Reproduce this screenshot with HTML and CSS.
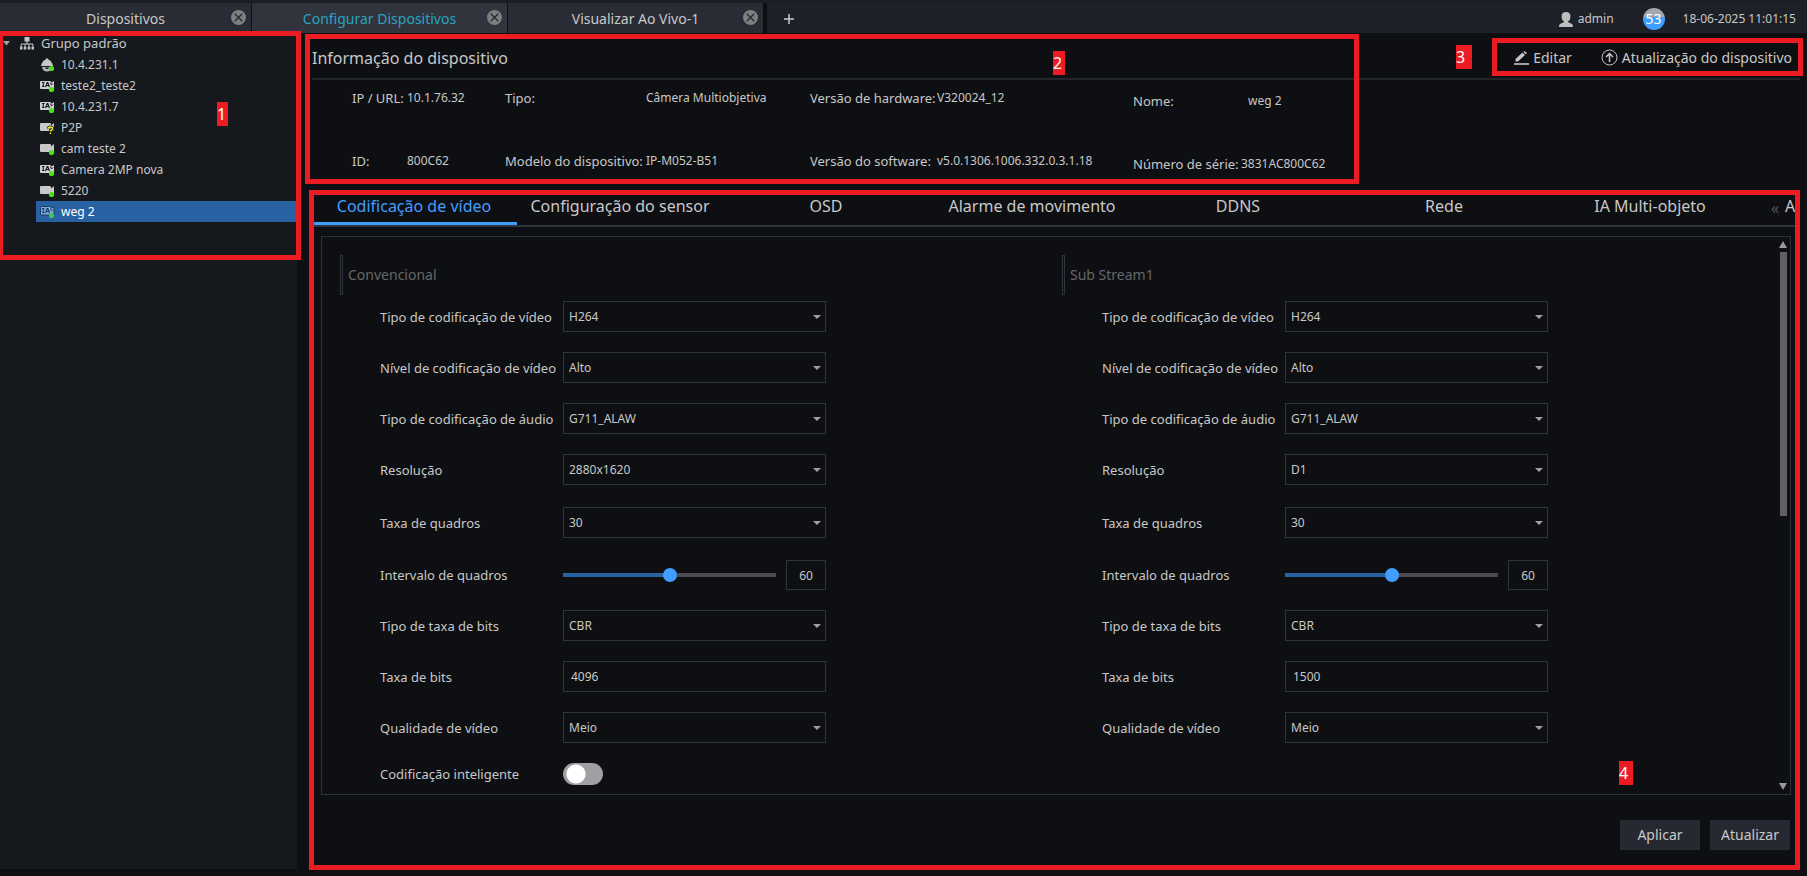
FILE: index.html
```
<!DOCTYPE html>
<html lang="pt">
<head>
<meta charset="utf-8">
<title>Configurar Dispositivos</title>
<link rel="stylesheet" href="styles.css">
</head>
<body>
<!-- icons used more than once -->
<svg class="sprite" aria-hidden="true">
  <symbol id="close" viewBox="0 0 15 15">
    <circle cx="7.5" cy="7.5" r="7.5" fill="#7e7f80"/>
    <path d="M3.8 3.8l7.4 7.4M11.2 3.8l-7.4 7.4" stroke="#26282e" stroke-width="1.3"/>
  </symbol>
  <symbol id="cam" viewBox="0 0 16 14">
    <path d="M1 2h9q1 0 1 1v1.500L14 2v8l-3-2v1q0 1-1 1H1q-1 0-1-1V3q0-1 1-1z" fill="#c8c8c8"/>
    <circle cx="11.500" cy="10.500" r="2.600" fill="#4fe01e"/>
  </symbol>
  <symbol id="ia" viewBox="0 0 16 14">
    <path d="M1 2h9.500l1 1.500L14 2v8H1q-1 0-1-1V3q0-1 1-1z" fill="#d0d0d0"/>
    <path d="M2 3.500h2.500M3.250 3.500v4M2 7.500h2.500M5.500 8l1.700-4.500h.6L9.500 8M6.500 6.500h2" fill="none" stroke="#15181d" stroke-width="1.100"/>
    <path d="M10.500 3.500l1 2.500 1.500-1.500" fill="none" stroke="#15181d"/>
    <circle cx="11.500" cy="10.500" r="2.600" fill="#4fe01e"/>
  </symbol>
</svg>

<div class="topbar">
  <div class="tab"><span>Dispositivos</span><button class="tab-close" aria-label="Fechar"><svg><use href="#close"/></svg></button></div>
  <div class="tab tab-active"><span>Configurar Dispositivos</span><button class="tab-close" aria-label="Fechar"><svg><use href="#close"/></svg></button></div>
  <div class="tab"><span>Visualizar Ao Vivo-1</span><button class="tab-close" aria-label="Fechar"><svg><use href="#close"/></svg></button></div>
  <div class="status">
    <button class="tab-new" aria-label="Nova aba"><svg width="10" height="10" viewBox="0 0 10 10"><path d="M5 0v10M0 5h10" stroke="#c8c8c8" stroke-width="1.500"/></svg></button>
    <svg class="user" width="14" height="15" viewBox="0 0 14 15"><path d="M7 0q4.500 0 4.500 4.500Q11.500 8 9 9.500v.5l4 2q1 .5 1 3H0q0-2.500 1-3l4-2v-.5Q2.500 8 2.500 4.500 2.500 0 7 0z" fill="#bdbdbd"/></svg>
    <span class="user-name">admin</span>
    <span class="usage">53</span>
    <span class="clock">18-06-2025 11:01:15</span>
  </div>
</div>

<div class="page">
  <nav class="sidebar">
    <div class="group">
      <svg class="caret" width="7" height="5" viewBox="0 0 7 5"><path d="M0 0h7L3.500 4.500z" fill="#a0a0a0"/></svg>
      <svg class="group-icon" width="14" height="13" viewBox="0 0 14 13"><path d="M4.500 0h5v4.500h-5zM0 9.500h2.500V12.500H0zM3.800 9.500h2.500v3H3.800zM7.700 9.500h2.500v3H7.700zM11.500 9.500H14v3h-2.500z" fill="#c8c8c8"/><path d="M7 4v3M1.200 9.500V7h11.600v2.500M5 9.500V7M9 9.500V7" fill="none" stroke="#c8c8c8"/></svg>
      <span>Grupo padrão</span>
    </div>
    <ul class="devices">
      <li><svg viewBox="0 0 16 14"><path d="M7 0l1.500 1.500Q12 3 13 8H1Q2 3 5.500 1.500z" fill="#c8c8c8"/><path d="M2 9h10q-1 4.500-5 4.500T2 9z" fill="#b5b5b5"/><path d="M5 9.500q.5 1.500 2 1.500t2-1.500z" fill="#15181d"/><circle cx="11.500" cy="10.500" r="2.600" fill="#4fe01e"/></svg><a href="#">10.4.231.1</a></li>
      <li><svg><use href="#ia"/></svg><a href="#">teste2_teste2</a></li>
      <li><svg><use href="#ia"/></svg><a href="#">10.4.231.7</a></li>
      <li><svg viewBox="0 0 16 14"><path d="M1 2h9q1 0 1 1v1.500L14 2v8l-3-2v1q0 1-1 1H1q-1 0-1-1V3q0-1 1-1z" fill="#c8c8c8"/><path d="M8.500 7.500q0-1.500 2-1.500t2 1.500-2 2v1M10.500 11.500v1.500" fill="none" stroke="#15181d" stroke-width="3"/><path d="M8.500 7.500q0-1.500 2-1.500t2 1.500-2 2v1M10.500 11.500v1.500" fill="none" stroke="#f4ee2a" stroke-width="1.400"/></svg><a href="#">P2P</a></li>
      <li><svg><use href="#cam"/></svg><a href="#">cam teste 2</a></li>
      <li><svg><use href="#ia"/></svg><a href="#">Camera 2MP nova</a></li>
      <li><svg><use href="#cam"/></svg><a href="#">5220</a></li>
      <li class="selected"><svg viewBox="0 0 16 14"><path d="M1.500 1.500h9l1 1.500L14 1.500V10H1.500q-1 0-1-1V2.500q0-1 1-1z" fill="#86a9cf" stroke="#123f73"/><path d="M2 3.500h2.500M3.250 3.500v4M2 7.500h2.500M5.500 8l1.700-4.500h.6L9.500 8M6.500 6.500h2" fill="none" stroke="#123f73" stroke-width="1.100"/><path d="M10.500 3.500l1 2.500 1.500-1.500" fill="none" stroke="#123f73"/><circle cx="11.500" cy="10.500" r="2.600" fill="#3cc656"/></svg><a href="#">weg 2</a></li>
    </ul>
    <div class="mark mark-1"></div>
    <span class="num num-1">1</span>
  </nav>

  <main class="main">
    <section class="info">
      <header class="info-head">
        <h1>Informação do dispositivo</h1>
        <button class="action"><svg width="15" height="14" viewBox="0 0 15 14"><path d="M0 13h15" stroke="#c8c8c8" stroke-width="1.600"/><path d="M1.500 8L8.500 1.500l2.500 2.500-7 6.500H1.500zM9.500 1l1-1 2.500 2-1.200 1.200z" fill="#c8c8c8"/></svg>Editar</button>
        <button class="action"><svg width="17" height="17" viewBox="0 0 17 17"><circle cx="8.500" cy="8.500" r="7.500" fill="none" stroke="#c8c8c8"/><path d="M8.500 13V5M5 8l3.500-3.500L12 8" fill="none" stroke="#c8c8c8" stroke-width="1.500"/></svg>Atualização do dispositivo</button>
      </header>
      <div class="facts">
        <dl class="fact-ip"><dt>IP / URL:</dt><dd>10.1.76.32</dd><dt>ID:</dt><dd>800C62</dd></dl>
        <dl class="fact-type"><dt>Tipo:</dt><dd>Câmera Multiobjetiva</dd><dt>Modelo do dispositivo:</dt><dd>IP-M052-B51</dd></dl>
        <dl class="fact-version"><dt>Versão de hardware:</dt><dd>V320024_12</dd><dt>Versão do software:</dt><dd>v5.0.1306.1006.332.0.3.1.18</dd></dl>
        <dl class="fact-name"><dt><label for="nome">Nome:</label></dt><dd><input id="nome" value="weg 2" readonly></dd><dt>Número de série:</dt><dd>3831AC800C62</dd></dl>
      </div>
      <div class="mark mark-2"></div>
      <span class="num num-2">2</span>
      <div class="mark mark-3"></div>
      <span class="num num-3">3</span>
    </section>

    <section class="config">
      <div class="views">
        <button class="view view-active">Codificação de vídeo</button>
        <button class="view">Configuração do sensor</button>
        <button class="view">OSD</button>
        <button class="view">Alarme de movimento</button>
        <button class="view">DDNS</button>
        <button class="view">Rede</button>
        <button class="view">IA Multi-objeto</button>
        <button class="view-prev" aria-label="Anterior">«</button>
        <button class="view view-cut">A</button>
      </div>

      <div class="panel">
        <form class="stream">
          <h2>Convencional</h2>
          <div class="row"><label for="m1">Tipo de codificação de vídeo</label><select id="m1"><option>H264</option></select></div>
          <div class="row"><label for="m2">Nível de codificação de vídeo</label><select id="m2"><option>Alto</option></select></div>
          <div class="row"><label for="m3">Tipo de codificação de áudio</label><select id="m3"><option>G711_ALAW</option></select></div>
          <div class="row"><label for="m4">Resolução</label><select id="m4"><option>2880x1620</option></select></div>
          <div class="row row-gap"><label for="m5">Taxa de quadros</label><select id="m5"><option>30</option></select></div>
          <div class="row row-gap row-slide"><label for="m6">Intervalo de quadros</label><div class="slide"><input type="range" id="m6" min="0" max="120" value="60"><input type="text" class="count" value="60" aria-label="Intervalo de quadros"></div></div>
          <div class="row"><label for="m7">Tipo de taxa de bits</label><select id="m7"><option>CBR</option></select></div>
          <div class="row"><label for="m8">Taxa de bits</label><input type="text" id="m8" value="4096"></div>
          <div class="row"><label for="m9">Qualidade de vídeo</label><select id="m9"><option>Meio</option></select></div>
          <div class="row row-switch"><label for="m10">Codificação inteligente</label><input type="checkbox" class="switch" id="m10"></div>
        </form>
        <form class="stream">
          <h2>Sub Stream1</h2>
          <div class="row"><label for="s1">Tipo de codificação de vídeo</label><select id="s1"><option>H264</option></select></div>
          <div class="row"><label for="s2">Nível de codificação de vídeo</label><select id="s2"><option>Alto</option></select></div>
          <div class="row"><label for="s3">Tipo de codificação de áudio</label><select id="s3"><option>G711_ALAW</option></select></div>
          <div class="row"><label for="s4">Resolução</label><select id="s4"><option>D1</option></select></div>
          <div class="row row-gap"><label for="s5">Taxa de quadros</label><select id="s5"><option>30</option></select></div>
          <div class="row row-gap row-slide"><label for="s6">Intervalo de quadros</label><div class="slide"><input type="range" id="s6" min="0" max="120" value="60"><input type="text" class="count" value="60" aria-label="Intervalo de quadros"></div></div>
          <div class="row"><label for="s7">Tipo de taxa de bits</label><select id="s7"><option>CBR</option></select></div>
          <div class="row"><label for="s8">Taxa de bits</label><input type="text" id="s8" value="1500"></div>
          <div class="row"><label for="s9">Qualidade de vídeo</label><select id="s9"><option>Meio</option></select></div>
        </form>
        <div class="scroll">
          <svg width="8" height="7" viewBox="0 0 8 7"><path d="M4 0l4 7H0z" fill="#9a9a9a"/></svg>
          <div class="scroll-track"><div class="scroll-thumb"></div></div>
          <svg width="8" height="7" viewBox="0 0 8 7"><path d="M0 0h8L4 7z" fill="#9a9a9a"/></svg>
        </div>
      </div>

      <footer class="buttons">
        <button>Aplicar</button>
        <button>Atualizar</button>
      </footer>
      <div class="mark mark-4"></div>
      <span class="num num-4">4</span>
    </section>
  </main>
</div>
</body>
</html>
```
FILE: styles.css
```
* {
  box-sizing: border-box;
}

body {
  margin: 0;
  height: 100vh;
  display: flex;
  flex-direction: column;
  overflow: hidden;
  background: #0e0f12;
  color: #c8c8c8;
  font-family: "Noto Sans", sans-serif;
  font-size: 12px;
  line-height: 20px;
}

button, input, select {
  font: inherit;
  color: inherit;
  margin: 0;
}

button {
  border: 0;
  padding: 0;
  background: none;
}

svg {
  flex: none;
}

.sprite {
  position: absolute;
  width: 0;
  height: 0;
}

/* top bar */
.topbar {
  display: flex;
  flex: none;
  height: 33px;
  border-top: 3px solid #1b1e25;
}

.tab {
  position: relative;
  width: 255px;
  margin-right: 1px;
  background: #292c34;
  font-size: 14px;
  line-height: 32px;
  text-align: center;
}

.tab:first-of-type {
  width: 251px;
}

.tab-active {
  background: #31343c;
  color: #2ba3c0;
}

.tab-close {
  position: absolute;
  right: 5px;
  top: 7px;
  width: 15px;
  height: 15px;
}

.tab-close svg {
  display: block;
  width: 15px;
  height: 15px;
}

.status {
  flex: 1;
  display: flex;
  align-items: center;
  margin-left: 3px;
  padding: 2px 11px 0 17px;
  background: #1d2027;
}

.tab-new {
  height: 10px;
  line-height: 0;
  margin-right: auto;
}

.user-name {
  margin: 0 29px 0 5px;
}

.usage {
  width: 22px;
  height: 22px;
  margin-right: 18px;
  border-radius: 50%;
  background: linear-gradient(#a3a6ac 40%, #409eff 40%);
  color: #fff;
  font-size: 14px;
  line-height: 22px;
  text-align: center;
}

.page {
  flex: 1;
  display: flex;
  min-height: 0;
}

/* device tree */
.sidebar {
  position: relative;
  flex: none;
  width: 297px;
  margin-bottom: 7px;
  background: #15181d;
  line-height: 21px;
}

.group {
  display: flex;
  align-items: center;
  gap: 7px;
  padding-left: 3px;
  font-size: 13px;
}

.group-icon {
  margin-left: 3px;
}

.devices {
  list-style: none;
  margin: 0;
  padding: 0 0 0 36px;
}

.devices li {
  display: flex;
  align-items: center;
  gap: 5px;
  padding-left: 4px;
}

.devices svg {
  width: 16px;
  height: 14px;
}

.devices a {
  color: inherit;
  text-decoration: none;
}

.devices .selected {
  background: #2962a3;
  color: #fff;
}

/* device information */
.main {
  flex: 1;
  display: flex;
  flex-direction: column;
  min-width: 0;
}

.info {
  position: relative;
  flex: none;
  height: 157px;
  padding: 0 7px 0 15px;
}

.info-head {
  display: flex;
  align-items: center;
  height: 47px;
  padding: 4px 8px 0 0;
  border-bottom: 2px solid #24262e;
}

.info-head h1 {
  flex: 1;
  margin: 0;
  font-size: 16px;
  font-weight: normal;
}

.action {
  display: flex;
  align-items: center;
  gap: 4px;
  margin-left: 29px;
  font-size: 14px;
}

.facts {
  display: flex;
  padding: 8px 0 0 40px;
}

.facts dl {
  display: grid;
  align-content: start;
  row-gap: 43px;
  margin: 0;
}

.facts dt {
  font-size: 13px;
  white-space: nowrap;
}

.facts dd {
  margin: 0;
}

.fact-ip {
  width: 153px;
  grid-template-columns: 55px auto;
}

.fact-type {
  width: 305px;
  grid-template-columns: 141px auto;
}

.fact-version {
  width: 323px;
  grid-template-columns: 127px auto;
}

.facts .fact-name {
  margin-top: 3px;
  grid-template-columns: 108px auto;
}

.fact-name input {
  display: block;
  width: 110px;
  height: 20px;
  padding: 0 7px;
  border: 0;
  background: none;
}

/* configuration */
.config {
  position: relative;
  flex: 1;
  display: flex;
  flex-direction: column;
  padding: 0 12px 0 14px;
}

.views {
  display: flex;
  flex: none;
  height: 37px;
  overflow: hidden;
  border-bottom: 2px solid #31333b;
}

.view {
  flex: none;
  width: 206px;
  font-size: 16px;
  line-height: 24px;
  border-bottom: 3px solid transparent;
}

.view-active {
  color: #409eff;
  border-color: #409eff;
}

.view-prev {
  flex: none;
  width: 32px;
  padding-left: 12px;
  color: #55565a;
  font-size: 16px;
}

.view-cut {
  text-align: left;
}

.panel {
  flex: 1;
  display: flex;
  margin: 9px 4px 0 10px;
  padding: 4px 3px 4px 18px;
  border: 1px solid #2f3138;
}

.stream {
  flex: 1;
  padding-top: 14px;
}

.stream + .stream {
  margin-left: 5px;
}

.stream h2 {
  display: flex;
  gap: 5px;
  margin: 0 0 6px;
  font-size: 14px;
  font-weight: normal;
  line-height: 40px;
  color: #66676a;
}

.stream h2::before {
  content: "";
  width: 1px;
  border: 1px solid #31333b;
}

.row {
  display: grid;
  grid-template-columns: 183px 263px;
  align-items: center;
  height: 31px;
  margin: 0 0 20px 40px;
}

.row label {
  font-size: 13px;
}

.row-gap {
  margin-top: 22px;
}

.row-slide {
  height: 30px;
}

.row select,
.row input[type="text"] {
  width: 100%;
  height: 31px;
  padding: 0 5px;
  border: 1px solid #31333b;
  border-radius: 0;
  background: transparent;
  outline: none;
}

.row select {
  appearance: none;
  background: url("data:image/svg+xml,%3Csvg xmlns='http://www.w3.org/2000/svg' width='8' height='4'%3E%3Cpath d='M0 0h8L4 4z' fill='%23a0a0a0'/%3E%3C/svg%3E") no-repeat right 4px center;
}

.row input[type="text"] {
  padding: 0 7px;
}

.slide {
  display: flex;
  align-items: center;
  gap: 10px;
}

.row .slide .count {
  width: 40px;
  height: 30px;
  padding: 0;
  text-align: center;
}

.slide input[type="range"] {
  appearance: none;
  flex: 1;
  min-width: 0;
  height: 14px;
  background: linear-gradient(90deg, #2962a3 50%, #4b4c50 50%) no-repeat center / 100% 4px;
}

.slide input[type="range"]::-webkit-slider-thumb {
  appearance: none;
  width: 14px;
  height: 14px;
  border-radius: 50%;
  background: #409eff;
}

.row-switch {
  height: 22px;
  margin-bottom: 0;
}

.switch {
  appearance: none;
  width: 40px;
  height: 22px;
  border-radius: 11px;
  background: radial-gradient(circle at 13px 11px, #fff 9px, #a0a0a4 10px);
}

.scroll {
  display: flex;
  flex-direction: column;
  align-items: center;
  width: 8px;
}

.scroll-track {
  flex: 1;
  margin: 4px 0;
}

.scroll-thumb {
  width: 7px;
  height: 50%;
  background: #606060;
}

.buttons {
  display: flex;
  justify-content: flex-end;
  gap: 10px;
  padding: 25px 5px 26px;
}

.buttons button {
  width: 80px;
  height: 30px;
  background: #272932;
  font-size: 14px;
}

/* red call-outs over the window */
.mark {
  position: absolute;
  border: 5px solid #ed1c24;
  pointer-events: none;
}

.num {
  position: absolute;
  height: 24px;
  background: #ed1c24;
  color: #fff;
  font-size: 16px;
  line-height: 24px;
}

.mark-1 {
  left: -2px;
  right: -4px;
  top: -2px;
  height: 229px;
  z-index: 1;
}

.num-1 {
  left: 217px;
  top: 69px;
  width: 11px;
}

.mark-2 {
  left: 8px;
  top: 1px;
  width: 1054px;
  height: 150px;
}

.num-2 {
  left: 756px;
  top: 18px;
  width: 12px;
}

.mark-3 {
  right: 4px;
  top: 5px;
  width: 311px;
  height: 38px;
}

.num-3 {
  right: 335px;
  top: 12px;
  width: 16px;
}

.mark-4 {
  left: 12px;
  right: 7px;
  top: 0;
  bottom: 6px;
}

.num-4 {
  right: 174px;
  bottom: 91px;
  width: 14px;
}
```
